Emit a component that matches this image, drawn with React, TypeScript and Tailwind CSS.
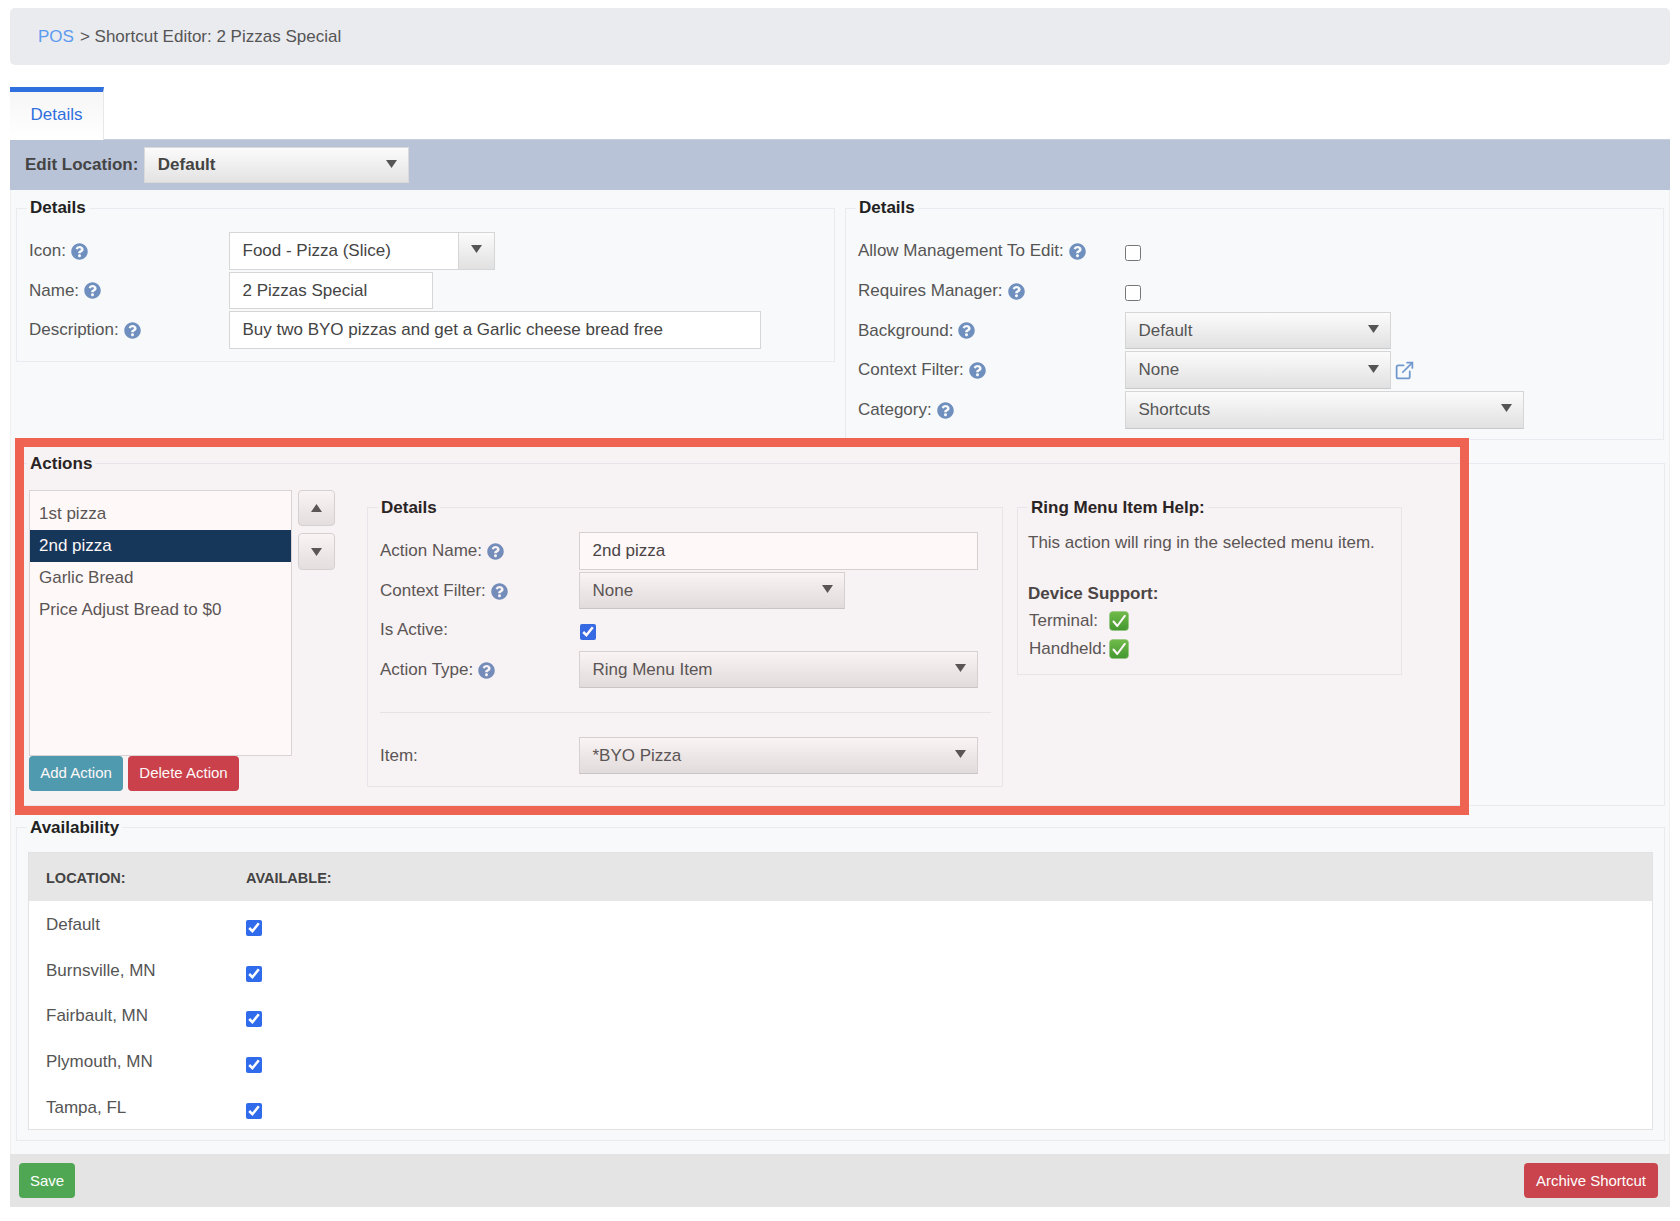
import React from "react";
import { FaQuestionCircle } from "react-icons/fa";
import { ExternalLink } from "lucide-react";

const Help = () => <FaQuestionCircle className="ml-[5px] mt-[1px] w-[17px] h-[17px] shrink-0 text-[#6f8fbe]" />;

const Caret = ({ up = false }: { up?: boolean }) => (
  <svg width="11" height="10" viewBox="0 0 11 10" className="shrink-0">
    <polygon points={up ? "5.5,1 11,9 0,9" : "0,1 11,1 5.5,9"} fill="#555" />
  </svg>
);

function Select({ label, className = "" }: { label: string; className?: string }) {
  return (
    <div className={`h-[37.5px] flex items-center justify-between pl-[12.5px] pr-[11px] border border-[#d6d6d6] border-b-[#c9c9c9] bg-linear-to-b from-[#fbfbfb] to-[#e1e1e1] text-[#555] ${className}`}>
      <span>{label}</span>
      <span className="-mt-[3px]"><Caret /></span>
    </div>
  );
}

function Input({ value, className = "" }: { value: string; className?: string }) {
  return (
    <div className={`h-[37.5px] flex items-center pl-[12.5px] border border-[#d6d6d6] bg-white text-[#444] ${className}`}>{value}</div>
  );
}

function Legend({ children }: { children: React.ReactNode }) {
  return <legend className="-ml-[2px] px-[3px] h-[20px] leading-[20px] font-bold text-[#222]">{children}</legend>;
}

function Row({ label, help = true, w, gap = "mb-[2px]", children }: { label: string; help?: boolean; w: string; gap?: string; children?: React.ReactNode }) {
  return (
    <div className={`flex items-center h-[37.5px] ${gap}`}>
      <div className={`flex items-center shrink-0 text-[#555] ${w}`}>
        <span>{label}</span>
        {help && <Help />}
      </div>
      {children}
    </div>
  );
}

const Check = ({ checked = true, className = "" }: { checked?: boolean; className?: string }) => (
  <input type="checkbox" readOnly checked={checked} className={`w-[16px] h-[16px] m-0 accent-[#2f6bea] ${className}`} />
);

const GreenCheck = () => (
  <svg width="20" height="20" viewBox="0 0 20 20" className="shrink-0">
    <defs>
      <linearGradient id="gc" x1="0" y1="0" x2="0" y2="1">
        <stop offset="0" stopColor="#6cc04a" />
        <stop offset="1" stopColor="#3c9a2e" />
      </linearGradient>
    </defs>
    <rect x="0.5" y="0.5" width="19" height="19" rx="3.5" fill="url(#gc)" stroke="#8fc97e" strokeWidth="0.6" />
    <path d="M4.5 10.5 L8.3 15 L15.8 4.8" fill="none" stroke="#fff" strokeWidth="2" strokeLinecap="round" strokeLinejoin="round" />
  </svg>
);

const ArrowButton = ({ up = false, className = "" }: { up?: boolean; className?: string }) => (
  <div className={`w-[37px] h-[36.5px] flex items-center justify-center rounded-[4px] border border-[#d6d6d6] bg-linear-to-b from-[#fbfbfb] to-[#e4e4e4] ${className}`}>
    <Caret up={up} />
  </div>
);

const actions = ["1st pizza", "2nd pizza", "Garlic Bread", "Price Adjust Bread to $0"];
const locations = ["Default", "Burnsville, MN", "Fairbault, MN", "Plymouth, MN", "Tampa, FL"];

export default function App() {
  return (
    <div className="w-[1680px] h-[1221px] bg-white pt-[8px] pl-[10px] pr-[10px] font-['Liberation_Sans',Arial,sans-serif] text-[17px] text-[#555]">
      <div className="h-[57px] flex items-center pl-[28px] rounded-[5px] bg-[#eaebef] text-[#555]">
        <span className="text-[#5b9bef]">POS</span>
        <span className="ml-[6px]">&gt; Shortcut Editor: 2 Pizzas Special</span>
      </div>

      <div className="mt-[22px] relative z-[1] w-[94px] h-[53px] -mb-[1px] pb-[2px] border-t-[5px] border-t-[#2f6fde] border-r border-r-[#e8e8e8] bg-linear-to-b from-[#f6f6f6] to-white flex items-center justify-center text-[#2f6fde]">
        Details
      </div>

      <div className="h-[51px] flex items-center pl-[15px] bg-[#b9c3d7] border-t border-[#c9cfdc]">
        <span className="font-bold text-[#444]">Edit Location:</span>
        <div className="ml-[6px] w-[265px] h-[36px] flex items-center justify-between pl-[12.5px] pr-[11px] border border-[#dadada] bg-linear-to-b from-[#fbfbfb] to-[#e3e3e3] text-[#444] font-bold">
          <span>Default</span>
          <span className="-mt-[3px]"><Caret /></span>
        </div>
      </div>

      <div className="bg-[#f8f9fa] pt-[8px] pl-[5px] pr-[5px] pb-[13px] border-l border-r border-[#f0f0f0]">
        <div className="flex items-start gap-[10px]">
          <fieldset className="w-[820px] border border-[#e9ebf0] pl-[12px] pb-[10px]">
            <Legend>Details</Legend>
            <div className="pt-[14px]">
              <Row label="Icon:" w="w-[200px]">
                <div className="w-[266px] h-[37.5px] flex border border-[#d6d6d6] bg-white text-[#444]">
                  <div className="flex-1 flex items-center pl-[12.5px]">Food - Pizza (Slice)</div>
                  <div className="w-[36px] flex items-center justify-center border-l border-[#d6d6d6] bg-linear-to-b from-[#fbfbfb] to-[#e1e1e1]">
                    <span className="-mt-[3px]"><Caret /></span>
                  </div>
                </div>
              </Row>
              <Row label="Name:" w="w-[200px]"><Input value="2 Pizzas Special" className="w-[204px]" /></Row>
              <Row label="Description:" w="w-[200px]"><Input value="Buy two BYO pizzas and get a Garlic cheese bread free" className="w-[532px]" /></Row>
            </div>
          </fieldset>

          <fieldset className="w-[820px] border border-[#e9ebf0] pl-[12px] pb-[8px]">
            <Legend>Details</Legend>
            <div className="pt-[14px]">
              <Row label="Allow Management To Edit:" w="w-[267px]" gap="mb-[2.3px]"><Check checked={false} className="mt-[5px]" /></Row>
              <Row label="Requires Manager:" w="w-[267px]" gap="mb-[2.3px]"><Check checked={false} className="mt-[5px]" /></Row>
              <Row label="Background:" w="w-[267px]" gap="mb-[2.3px]"><Select label="Default" className="w-[266px]" /></Row>
              <Row label="Context Filter:" w="w-[267px]" gap="mb-[2.3px]">
                <Select label="None" className="w-[266px]" />
                <ExternalLink className="ml-[3px] w-[21px] h-[21px] text-[#6f98cf]" strokeWidth={2} />
              </Row>
              <Row label="Category:" w="w-[267px]" gap="mb-[2.3px]"><Select label="Shortcuts" className="w-[399px]" /></Row>
            </div>
          </fieldset>
        </div>

        <div className="relative mt-[14px]">
          <fieldset className="w-[1649px] border border-[#e9ebf0] pl-[12px] pb-[14px]">
            <Legend>Actions</Legend>
            <div className="pt-[16px] flex items-start">
              <div className="w-[263px] shrink-0">
                <div className="h-[266px] border border-[#d9d9d9] bg-white pt-[7px]">
                  {actions.map((a) => (
                    <div key={a} className={`h-[32px] flex items-center pl-[9px] ${a === "2nd pizza" ? "bg-[#0d355a] text-white" : "text-[#555]"}`}>{a}</div>
                  ))}
                </div>
                <div className="flex gap-[5px] text-[15px] text-white">
                  <div className="w-[94px] h-[35px] flex items-center justify-center rounded-[4px] bg-[#4a9db3]">Add Action</div>
                  <div className="w-[111px] h-[35px] flex items-center justify-center rounded-[4px] bg-[#c9404b]">Delete Action</div>
                </div>
              </div>

              <div className="ml-[6px] w-[37px] shrink-0">
                <ArrowButton up />
                <ArrowButton className="mt-[7px]" />
              </div>

              <fieldset className="ml-[32px] mt-[8px] w-[636px] shrink-0 border border-[#e9ebf0] pl-[12px] pb-[10px]">
                <Legend>Details</Legend>
                <div className="pt-[14.5px]">
                  <Row label="Action Name:" w="w-[199px]"><Input value="2nd pizza" className="w-[399px]" /></Row>
                  <Row label="Context Filter:" w="w-[199px]"><Select label="None" className="w-[266px]" /></Row>
                  <Row label="Is Active:" help={false} w="w-[199px]"><Check className="mt-[3px] ml-[1px]" /></Row>
                  <Row label="Action Type:" w="w-[199px]"><Select label="Ring Menu Item" className="w-[399px]" /></Row>
                  <div className="mt-[23.5px] mb-[24px] mr-[11px] h-[1px] bg-[#e9e9e9]" />
                  <Row label="Item:" help={false} w="w-[199px]"><Select label="*BYO Pizza" className="w-[399px]" /></Row>
                </div>
              </fieldset>

              <fieldset className="ml-[14px] mt-[8px] w-[385px] shrink-0 border border-[#e9ebf0] pl-[10px] pb-[13px]">
                <legend className="px-[3px] h-[20px] leading-[20px] font-bold text-[#222]">Ring Menu Item Help:</legend>
                <div className="pt-[14px] leading-[22px]">This action will ring in the selected menu item.</div>
                <div className="mt-[29px] leading-[22px] font-bold text-[#444]">Device Support:</div>
                <div className="mt-[4px] ml-[1px] flex items-center h-[24px]"><span className="w-[80px]">Terminal:</span><GreenCheck /></div>
                <div className="mt-[4px] ml-[1px] flex items-center h-[24px]"><span className="w-[80px]">Handheld:</span><GreenCheck /></div>
              </fieldset>
            </div>
          </fieldset>
          <div className="absolute z-10 pointer-events-none -left-[1px] -top-[16px] w-[1454px] h-[377px] border-[9px] border-[#ee6352] bg-[#ee6352]/[0.045]" />
        </div>

        <fieldset className="mt-[12px] w-[1649px] border border-[#e9ebf0] pl-[12px] pr-[11px] pb-[10px]">
          <Legend>Availability</Legend>
          <div className="mt-[14px] -ml-[1px] border border-[#e2e2e2] bg-white">
            <div className="h-[48px] pt-[3px] flex items-center bg-[#e6e6e6] text-[14.5px] font-bold text-[#444]">
              <span className="w-[217px] pl-[17px]">LOCATION:</span>
              <span>AVAILABLE:</span>
            </div>
            {locations.map((l) => (
              <div key={l} className="h-[45.7px] flex items-start">
                <span className="w-[217px] pl-[17px] mt-[12px] leading-[24px]">{l}</span>
                <Check className="mt-[19px]" />
              </div>
            ))}
          </div>
        </fieldset>
      </div>

      <div className="h-[53px] flex items-center justify-between pl-[9px] pr-[12px] bg-[#e4e4e4] text-[15px] text-white">
        <div className="w-[56px] h-[35px] flex items-center justify-center rounded-[4px] bg-[#4fa754]">Save</div>
        <div className="w-[134px] h-[35px] flex items-center justify-center rounded-[4px] bg-[#c9444c]">Archive Shortcut</div>
      </div>
    </div>
  );
}
